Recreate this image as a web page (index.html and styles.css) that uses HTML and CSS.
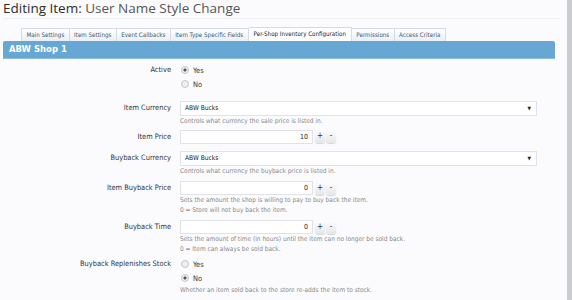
FILE: index.html
```html
<!DOCTYPE html>
<html lang="en">
<head>
    <meta charset="UTF-8">
    <title>Editing Item: User Name Style Change</title>
    <link rel="stylesheet" href="styles.css">
</head>
<body>
    <div class="page">
        <h1 class="title">Editing Item: <span>User Name Style Change</span></h1>

        <ul class="tabs">
            <li>Main Settings</li>
            <li>Item Settings</li>
            <li>Event Callbacks</li>
            <li>Item Type Specific Fields</li>
            <li class="active">Per-Shop Inventory Configuration</li>
            <li>Permissions</li>
            <li>Access Criteria</li>
        </ul>

        <div class="panel-head">ABW Shop 1</div>

        <div class="form">
            <div class="row choice">
                <div class="label">Active</div>
                <div class="control">
                    <label class="radio"><span class="dot checked"></span>Yes</label>
                    <label class="radio"><span class="dot"></span>No</label>
                </div>
            </div>

            <div class="row tight">
                <div class="label">Item Currency</div>
                <div class="control">
                    <div class="select">ABW Bucks<span class="arrow">&#9660;</span></div>
                    <p class="hint">Controls what currency the sale price is listed in.</p>
                </div>
            </div>

            <div class="row loose">
                <div class="label">Item Price</div>
                <div class="control">
                    <div class="spinner">
                        <div class="number">10</div>
                        <span class="btn">+</span>
                        <span class="btn">-</span>
                    </div>
                </div>
            </div>

            <div class="row">
                <div class="label">Buyback Currency</div>
                <div class="control">
                    <div class="select">ABW Bucks<span class="arrow">&#9660;</span></div>
                    <p class="hint">Controls what currency the buyback price is listed in.</p>
                </div>
            </div>

            <div class="row">
                <div class="label">Item Buyback Price</div>
                <div class="control">
                    <div class="spinner">
                        <div class="number">0</div>
                        <span class="btn">+</span>
                        <span class="btn">-</span>
                    </div>
                    <p class="hint">Sets the amount the shop is willing to pay to buy back the item.<br>0 = Store will not buy back the item.</p>
                </div>
            </div>

            <div class="row tight">
                <div class="label">Buyback Time</div>
                <div class="control">
                    <div class="spinner">
                        <div class="number">0</div>
                        <span class="btn">+</span>
                        <span class="btn">-</span>
                    </div>
                    <p class="hint">Sets the amount of time (in hours) until the item can no longer be sold back.<br>0 = Item can always be sold back.</p>
                </div>
            </div>

            <div class="row">
                <div class="label">Buyback Replenishes Stock</div>
                <div class="control">
                    <label class="radio"><span class="dot"></span>Yes</label>
                    <label class="radio"><span class="dot checked"></span>No</label>
                    <p class="hint">Whether an item sold back to the store re-adds the item to stock.</p>
                </div>
            </div>
        </div>
    </div>
</body>
</html>
```

FILE: styles.css
```css
body {
    margin: 0;
    background: #fbfbfd;
    font-family: "DejaVu Sans Condensed", "DejaVu Sans", sans-serif;
    color: #333;
    overflow: hidden;
}
.page {
    width: 564px;
    height: 300px;
    border-right: 5px solid #c9cdd1;
    padding: 0 0 0 3px;
    box-sizing: content-box;
}
.title {
    margin: 0;
    padding: 1px 0 2px;
    width: 557px;
    font-family: "Open Sans", sans-serif;
    font-weight: normal;
    font-size: 13.5px;
    line-height: 15px;
    color: #2b2b2b;
    border-bottom: 1px solid #eceef2;
}
.title span {
    color: #555;
}
.tabs {
    list-style: none;
    margin: 8px 0 0 18px;
    padding: 0;
    display: flex;
    align-items: flex-end;
    height: 14px;
}
.tabs li {
    height: 12px;
    line-height: 12px;
    padding: 0 4.4px;
    font-size: 6.2px;
    color: #43576b;
    background: linear-gradient(#ffffff, #e9eff6);
    border: 1px solid #d3dce6;
    border-bottom: none;
    border-left: none;
}
.tabs li:first-child {
    border-left: 1px solid #d3dce6;
}
.tabs li.active {
    height: 13px;
    padding: 0 5px;
    background: #fff;
    color: #222;
}
.panel-head {
    width: 546px;
    height: 17px;
    line-height: 17px;
    padding-left: 6px;
    background: #67a7d3;
    border-bottom: 1px solid #8dbde0;
    color: #fff;
    font-family: "DejaVu Sans", sans-serif;
    font-weight: bold;
    font-size: 8.5px;
    border-radius: 2px 2px 0 0;
}
.form {
    padding-top: 4px;
}
.row {
    display: grid;
    grid-template-columns: 168px 1fr;
    column-gap: 9px;
    margin-bottom: 5px;
}
.row.choice {
    margin-bottom: 10px;
}
.row.tight {
    margin-bottom: 3px;
}
.row.loose {
    margin-bottom: 7px;
}
.label {
    text-align: right;
    font-size: 7.4px;
    color: #333;
    line-height: 14px;
}
.control {
    font-size: 7.4px;
}
.radio {
    display: flex;
    align-items: center;
    height: 14px;
    color: #333;
}
.dot {
    width: 6px;
    height: 6px;
    border: 1px solid #c8c8c8;
    border-radius: 50%;
    background: #eee;
    margin: 0 4px 0 1px;
}
.dot.checked {
    background: radial-gradient(circle, #555 0 1.3px, #eee 1.8px);
}
.select {
    width: 351px;
    height: 13px;
    line-height: 13px;
    border: 1px solid #dfe3e8;
    background: #fff;
    padding: 0 0 0 4px;
    display: flex;
    justify-content: space-between;
    font-size: 6.6px;
    color: #222;
}
.arrow {
    font-size: 5px;
    padding-right: 5px;
}
.hint {
    margin: 1px 0 0;
    font-size: 6.5px;
    line-height: 9.5px;
    color: #8a8a8a;
}
.spinner {
    display: flex;
    align-items: center;
    gap: 1px;
    height: 14px;
}
.number {
    width: 127px;
    height: 12px;
    line-height: 12px;
    border: 1px solid #dfe3e8;
    background: #fff;
    text-align: right;
    padding-right: 4px;
    font-size: 7px;
    color: #222;
    margin-right: 1px;
}
.btn {
    width: 10px;
    height: 13px;
    line-height: 12px;
    text-align: center;
    font-size: 8px;
    color: #333;
    background: linear-gradient(#fdfdfd, #e4e6ea);
    border-radius: 3px;
    box-shadow: 0 1px 1px rgba(0, 0, 0, 0.15);
}
```
